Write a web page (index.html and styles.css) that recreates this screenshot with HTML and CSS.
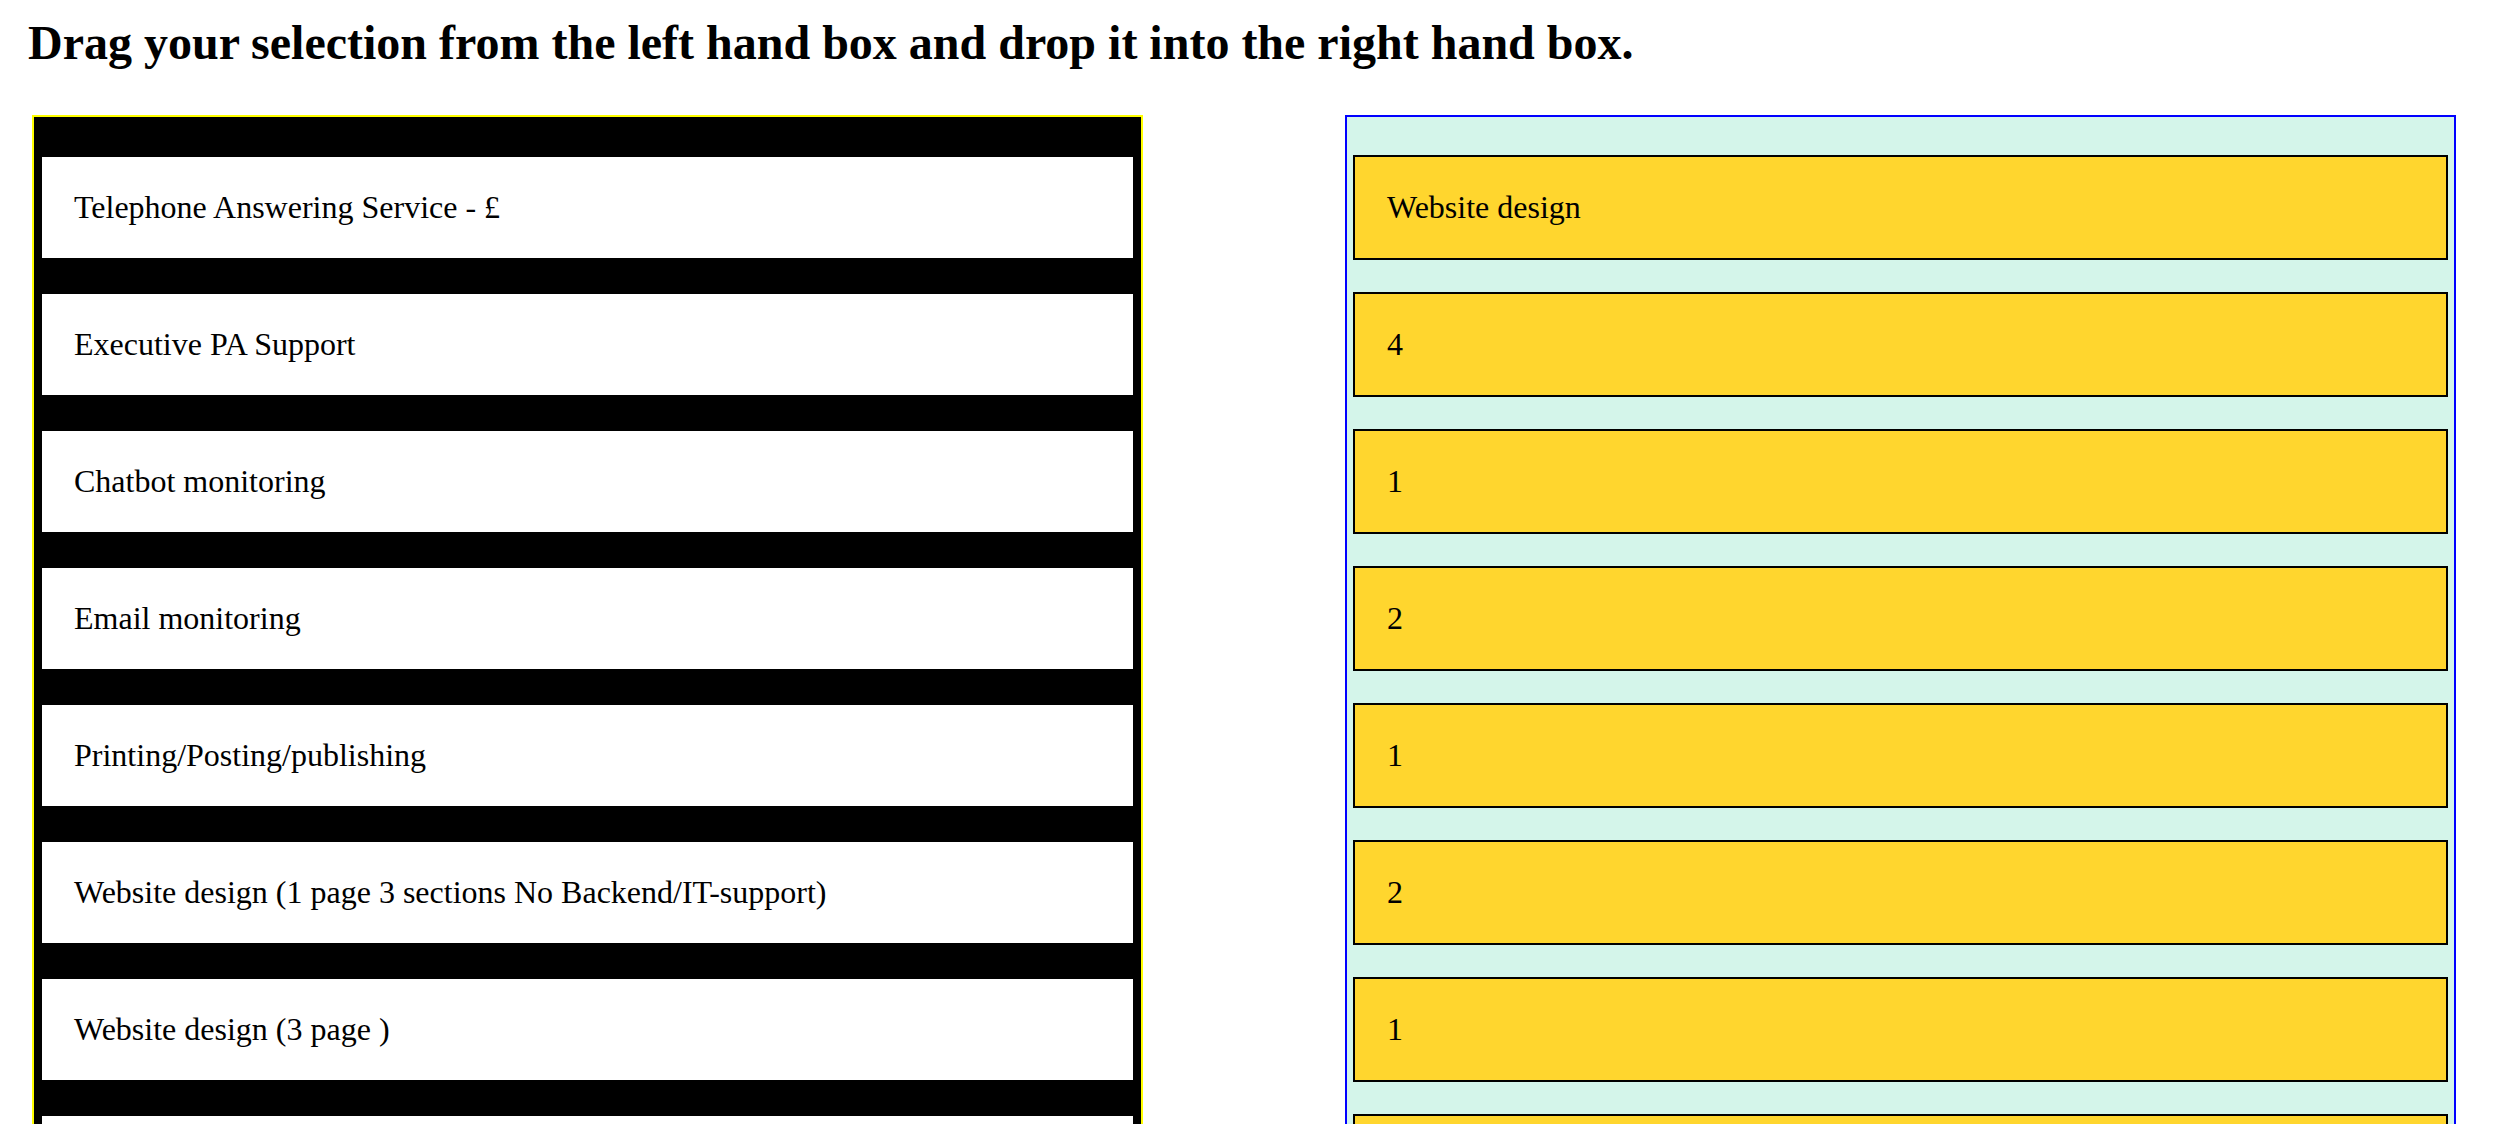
FILE: index.html
```html
<!DOCTYPE html>
<html lang="en">
<head>
<meta charset="utf-8">
<title>Drag and drop</title>
<link rel="stylesheet" href="styles.css">
</head>
<body>
<h1 class="title">Drag your selection from the left hand box and drop it into the right hand box.</h1>
<div class="board">
  <div class="box source">
    <div class="item">Telephone Answering Service - £</div>
    <div class="item">Executive PA Support</div>
    <div class="item">Chatbot monitoring</div>
    <div class="item">Email monitoring</div>
    <div class="item">Printing/Posting/publishing</div>
    <div class="item">Website design (1 page 3 sections No Backend/IT-support)</div>
    <div class="item">Website design (3 page )</div>
    <div class="item">Website design (5 page )</div>
  </div>
  <div class="box target">
    <div class="item">Website design</div>
    <div class="item">4</div>
    <div class="item">1</div>
    <div class="item">2</div>
    <div class="item">1</div>
    <div class="item">2</div>
    <div class="item">1</div>
    <div class="item">2</div>
  </div>
</div>
</body>
</html>
```
FILE: styles.css
```css
body {
  margin: 0;
  font-family: "Liberation Serif", "Times New Roman", serif;
  color: #000;
  background: #fff;
}
.title {
  font-size: 48px;
  font-weight: bold;
  line-height: 55px;
  margin: 15px 0 0 28px;
}
.board {
  display: flex;
  align-items: flex-start;
  gap: 202px;
  margin: 45px 0 0 32px;
}
.box {
  width: 1095px;
  padding: 6px;
  display: flex;
  flex-direction: column;
  gap: 32px;
  padding-top: 38px;
}
.source {
  background: #000;
  border: 2px solid #ffff00;
}
.target {
  background: #d4f5ea;
  border: 2px solid #0000ff;
}
.item {
  border: 2px solid #000;
  padding: 32px;
  font-size: 32px;
  line-height: 37px;
}
.source .item {
  background: #fff;
}
.target .item {
  background: #ffd62e;
}
```
